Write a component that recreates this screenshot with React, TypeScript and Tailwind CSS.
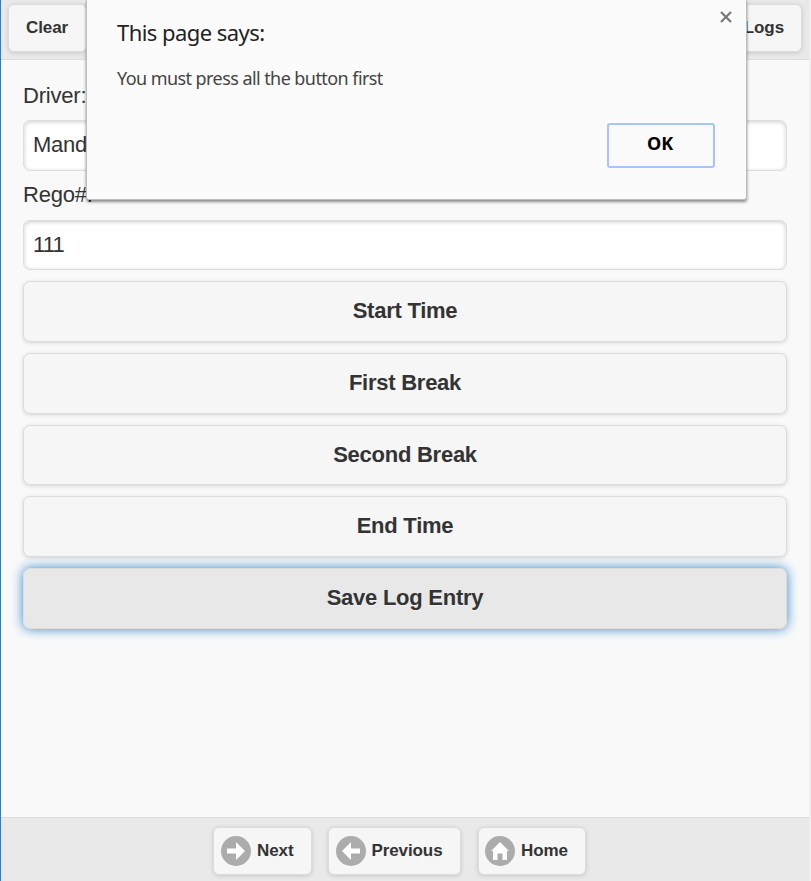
import type { ReactNode } from 'react';

const raised = 'border border-[#ddd] bg-[#f6f6f6] shadow-[0_1px_4px_rgba(0,0,0,0.15)]';
const textGlow = '[text-shadow:0_1px_0_#f3f3f3]';

function BarButton({ className, children }: { className: string; children: ReactNode }) {
  return (
    <button
      className={`flex h-[48px] items-center rounded-[6px] pb-px text-[17px] font-bold tracking-[-0.1px] whitespace-nowrap ${raised} ${textGlow} ${className}`}
    >
      {children}
    </button>
  );
}

function ActionButton({ className, children }: { className: string; children: ReactNode }) {
  return (
    <button
      className={`block w-full shrink-0 rounded-[7px] text-center text-[22px] font-bold tracking-[-0.25px] ${textGlow} ${className}`}
    >
      {children}
    </button>
  );
}

function Disc({ children }: { children: ReactNode }) {
  return (
    <svg className="mt-px h-[30px] w-[30px] shrink-0" viewBox="0 0 30 30">
      <circle cx="15" cy="15" r="15" fill="#acacac" />
      {children}
    </svg>
  );
}

function Field({ value, className }: { value: string; className: string }) {
  return (
    <input
      readOnly
      value={value}
      className={`block w-full shrink-0 rounded-[7px] border border-[#ddd] bg-white px-[9px] text-[22px] shadow-[inset_0_1px_4px_rgba(0,0,0,0.2)] outline-none ${className}`}
    />
  );
}

export default function App() {
  return (
    <div className="relative flex h-[881px] w-[811px] flex-col overflow-hidden border-r-2 border-l border-r-[#f0f0f0] border-l-[#1883d7] bg-[#f9f9f9] font-['Liberation_Sans',Arial,sans-serif] text-[#333]">
      <header className="flex h-[60px] shrink-0 items-start justify-between border-b border-[#ddd] bg-[#e9e9e9] pt-1 pr-[7px] pl-[7px]">
        <BarButton className="w-[79px] pl-[17px]">Clear</BarButton>
        <BarButton className="w-[126px] justify-end pr-[17px]">View Logs</BarButton>
      </header>

      <main className="flex grow flex-col pr-[22px] pl-[22px]">
        <label className="mt-[20px] h-[31px] shrink-0 text-[22px] leading-[31px] tracking-[-0.2px]">
          Driver:
        </label>
        <Field value="Mandeep" className="mt-[9px] h-[51px] pb-[2px] tracking-[-0.3px]" />
        <label className="mt-[8px] h-[31px] shrink-0 text-[22px] leading-[31px] tracking-[-0.2px]">
          Rego#:
        </label>
        <Field value="111" className="mt-[10px] h-[50px] pb-0 tracking-[-0.8px]" />
        <ActionButton className={`mt-[11px] h-[61px] pb-[3px] ${raised}`}>Start Time</ActionButton>
        <ActionButton className={`mt-[11px] h-[61px] pb-[3px] ${raised}`}>First Break</ActionButton>
        <ActionButton className={`mt-[11px] h-[60px] pb-[1px] ${raised}`}>Second Break</ActionButton>
        <ActionButton className={`mt-[11px] h-[61px] pb-[3px] ${raised}`}>End Time</ActionButton>
        <ActionButton className="mt-[11px] h-[61px] border border-[#ddd] bg-[#e8e8e8] pb-[3px] shadow-[0_0_12px_#3388cc]">
          Save Log Entry
        </ActionButton>
      </main>

      <footer className="flex h-[64px] shrink-0 items-start gap-[16px] border-t border-[#ddd] bg-[#e9e9e9] pt-[9px] pl-[212px]">
        <BarButton className="w-[99px] gap-[6px] pl-[7px]">
          <Disc>
            <path d="M6 12.5H15V6L24 15L15 24V17.5H6Z" fill="#fff" />
          </Disc>
          Next
        </BarButton>
        <BarButton className="w-[133px] gap-[5.5px] pl-[7px]">
          <Disc>
            <path d="M24 12.5H15V6L6 15L15 24V17.5H24Z" fill="#fff" />
          </Disc>
          Previous
        </BarButton>
        <BarButton className="ml-px w-[108px] gap-[6px] pl-[6px]">
          <Disc>
            <path d="M15 6L24 15H22V24H17.5V17.5H12.5V24H8V15H6Z" fill="#fff" />
          </Disc>
          Home
        </BarButton>
      </footer>

      <div
        role="alertdialog"
        className="absolute top-0 left-[85px] flex h-[200px] w-[661px] flex-col rounded-b-[3px] border border-t-0 border-[#bdbdbd] bg-[#fbfbfb] pr-[31px] pl-[30px] font-['Noto_Sans','Segoe_UI',sans-serif] shadow-[0_2px_3px_rgba(0,0,0,0.45)]"
      >
        <h1 className="mt-[17px] h-[30px] text-[22px] leading-[30px] tracking-[-0.55px] text-[#222]">
          This page says:
        </h1>
        <p className="mt-[18px] h-[26px] text-[18px] leading-[26px] tracking-[-0.57px] text-[#444]">
          You must press all the button first
        </p>
        <button className="mt-[32px] h-[45px] w-[108px] self-end rounded-[3px] border-2 border-[#a8c4f8] bg-[#fafafa] pr-[2px] pb-[4px] text-[18px] font-bold text-black">
          OK
        </button>
        <svg className="absolute top-[11px] right-[14px] h-3 w-3" viewBox="0 0 12 12">
          <path d="M1 1L11 11M11 1L1 11" stroke="#777" strokeWidth="2.2" />
        </svg>
      </div>
    </div>
  );
}
